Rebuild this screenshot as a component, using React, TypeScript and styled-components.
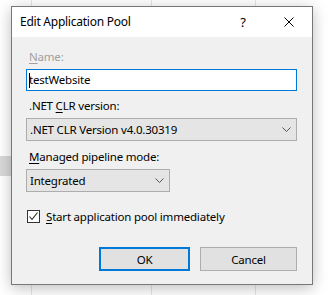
import React from "react";
import styled, { createGlobalStyle } from "styled-components";

const GlobalStyle = createGlobalStyle`
  html, body { margin: 0; padding: 0; background: #ffffff; }
  body { width: 328px; height: 295px; overflow: hidden; font-family: "Noto Sans", "Open Sans", sans-serif; }
  * { box-sizing: border-box; }
`;

const Desktop = styled.div`
  position: relative;
  width: 328px;
  height: 295px;
  background: #ffffff;
  overflow: hidden;
`;

const ListView = styled.div`
  display: flex;
  height: 100%;
`;

const Column = styled.div<{ $w: number }>`
  width: ${(p) => p.$w}px;
  flex: none;
  height: 100%;
  border-right: 1px solid #e5e5e5;
`;

const SelectedRow = styled.div`
  position: absolute;
  left: 0;
  top: 156px;
  width: 100px;
  height: 20px;
  background: #d9d9d9;
`;

const Dialog = styled.div`
  position: absolute;
  left: 11px;
  top: 6px;
  width: 302px;
  height: 279px;
  border: 1px solid #777777;
  background: #f0f0f0;
  box-shadow: 0 3px 14px rgba(0, 0, 0, 0.26);
  display: flex;
  flex-direction: column;
  color: #000000;
  font-size: 11.5px;
  letter-spacing: -0.2px;
`;

const TitleBar = styled.div`
  height: 30px;
  background: #ffffff;
  display: flex;
  align-items: center;
  padding-left: 8px;
  flex: none;
`;

const Title = styled.div`
  flex: 1;
  font-size: 12px;
  letter-spacing: -0.25px;
  line-height: 16px;
  padding-bottom: 1px;
`;

const TitleButton = styled.div<{ $w: number }>`
  width: ${(p) => p.$w}px;
  height: 30px;
  display: flex;
  align-items: center;
  justify-content: center;
  font-size: 13px;
`;

const Body = styled.div`
  flex: 1;
  padding: 12px 15px 0 14px;
  display: flex;
  flex-direction: column;
`;

const Label = styled.div<{ $disabled?: boolean; $mt?: number }>`
  margin-top: ${(p) => p.$mt ?? 0}px;
  padding-left: 3px;
  line-height: 16px;
  height: 16px;
  color: ${(p) => (p.$disabled ? "#a0a0a0" : "#000000")};
  margin-bottom: 4px;
`;

const Key = styled.span`
  text-decoration: underline;
  text-underline-offset: 2px;
`;

const TextInput = styled.div`
  height: 22px;
  border: 1px solid #0078d7;
  background: #ffffff;
  padding-left: 2px;
  line-height: 20px;
  display: flex;
  align-items: center;
`;

const Caret = styled.span`
  width: 1px;
  height: 15px;
  background: #000;
  margin-right: -1px;
`;

const Select = styled.div<{ $w?: number }>`
  width: ${(p) => (p.$w ? `${p.$w}px` : "100%")};
  height: 23px;
  border: 1px solid #adadad;
  background: #e5e5e5;
  display: flex;
  align-items: center;
  justify-content: space-between;
  padding: 0 4px 0 3px;
  line-height: 21px;
`;

const Chevron = () => (
  <svg width="9" height="5" viewBox="0 0 9 5" style={{ marginRight: 1 }}>
    <polyline points="0.5,0.5 4.5,4.5 8.5,0.5" fill="none" stroke="#555" strokeWidth="1" />
  </svg>
);

const CheckRow = styled.div`
  margin-top: 16px;
  display: flex;
  align-items: center;
  height: 16px;
  padding-left: 1px;
`;

const CheckBox = styled.div`
  width: 13px;
  height: 13px;
  border: 1px solid #333333;
  background: #ffffff;
  margin-right: 6px;
  display: flex;
  align-items: center;
  justify-content: center;
`;

const ButtonRow = styled.div`
  margin-top: 23px;
  display: flex;
  justify-content: flex-end;
  gap: 10px;
`;

const Button = styled.div<{ $default?: boolean; $w: number }>`
  width: ${(p) => p.$w}px;
  height: 24px;
  background: #e1e1e1;
  border: ${(p) => (p.$default ? "2px solid #0078d7" : "1px solid #adadad")};
  display: flex;
  align-items: center;
  justify-content: center;
`;

export default function App() {
  return (
    <>
      <GlobalStyle />
      <Desktop>
        <ListView>
          <Column $w={32} />
          <Column $w={120} />
          <Column $w={104} />
        </ListView>
        <SelectedRow />
        <Dialog>
          <TitleBar>
            <Title>Edit Application Pool</Title>
            <TitleButton $w={46}>?</TitleButton>
            <TitleButton $w={46}>
              <svg width="10" height="10" viewBox="0 0 10 10">
                <path d="M0.5 0.5 L9.5 9.5 M9.5 0.5 L0.5 9.5" stroke="#000" strokeWidth="1" />
              </svg>
            </TitleButton>
          </TitleBar>
          <Body>
            <Label $disabled>
              <Key>N</Key>ame:
            </Label>
            <TextInput>
              <Caret />
              testWebsite
            </TextInput>
            <Label $mt={7}>
              .NET <Key>C</Key>LR version:
            </Label>
            <Select>
              .NET CLR Version v4.0.30319
              <Chevron />
            </Select>
            <Label $mt={8}>
              <Key>M</Key>anaged pipeline mode:
            </Label>
            <Select $w={144}>
              Integrated
              <Chevron />
            </Select>
            <CheckRow>
              <CheckBox>
                <svg width="11" height="11" viewBox="0 0 11 11">
                  <polyline points="1.5,5.5 4,8.5 9.5,1.5" fill="none" stroke="#222" strokeWidth="1.1" />
                </svg>
              </CheckBox>
              <span>
                <Key>S</Key>tart application pool immediately
              </span>
            </CheckRow>
            <ButtonRow>
              <Button $default $w={91}>OK</Button>
              <Button $w={97}>Cancel</Button>
            </ButtonRow>
          </Body>
        </Dialog>
      </Desktop>
    </>
  );
}
